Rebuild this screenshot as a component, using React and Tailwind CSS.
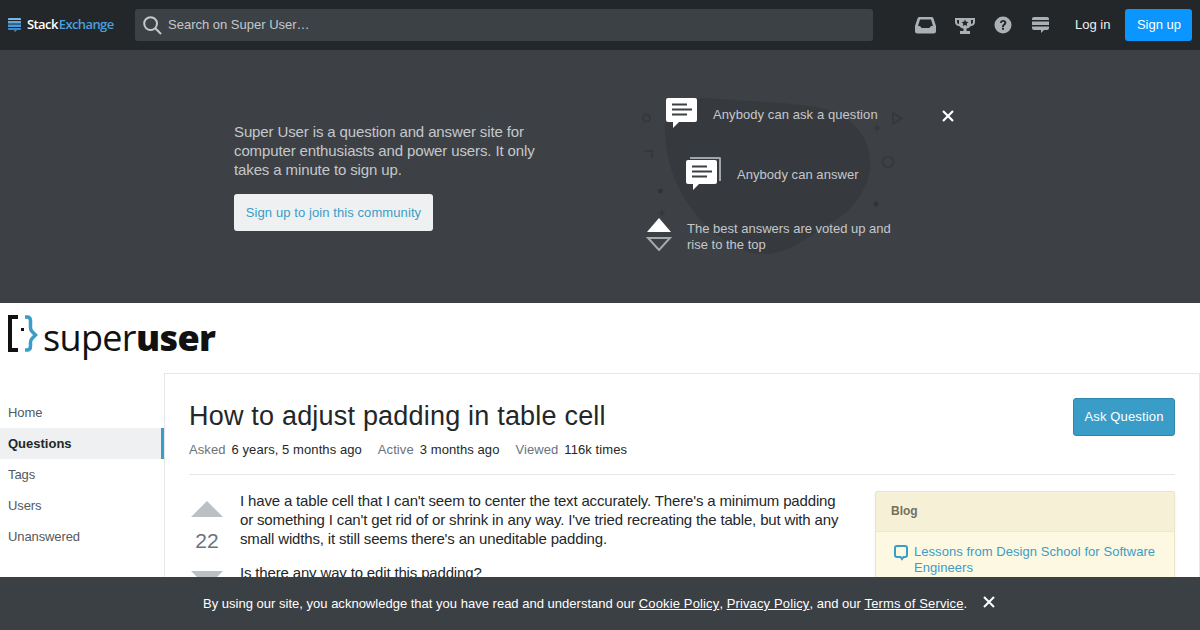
const sans = { fontFamily: '"Liberation Sans", Arial, sans-serif' };

function Bubble({ className }) {
  return (
    <svg className={className} viewBox="0 0 31 30" aria-hidden="true">
      <path d="M2 0h27a2 2 0 0 1 2 2v20a2 2 0 0 1-2 2H13l-6 6v-6H2a2 2 0 0 1-2-2V2a2 2 0 0 1 2-2z" fill="#fff" />
      <path d="M6 5.500h15v2H6zM6 10.500h20v2H6zM6 15.500h15v2H6z" fill="#3b4045" />
    </svg>
  );
}

function Nav({ children, active }) {
  return (
    <div className={active
      ? 'h-[31px] pl-2 flex items-center text-[13px] font-bold text-[#242729] bg-[#eff0f1] border-r-[3px] border-[#3a9dc8]'
      : 'h-[31px] pl-2 flex items-center text-[13px] tracking-[-0.1px] text-[#535a60]'}>
      {children}
    </div>
  );
}

export default function App() {
  return (
    <div className="relative w-[1200px] h-[630px] overflow-hidden bg-white" style={sans}>
      {/* top bar */}
      <header className="h-[50px] bg-[#242729] flex items-center pl-2 pr-2">
        <div className="w-[127px] flex items-center shrink-0">
          <svg className="w-[13px] h-[16px] mr-[6px]" viewBox="0 0 13 16">
            <path d="M1 1h11a1 1 0 0 1 1 1v1H0V2a1 1 0 0 1 1-1z" fill="#7ab7e6" />
            <rect y="4" width="13" height="2.500" fill="#5fa8e0" />
            <rect y="7.500" width="13" height="2.500" fill="#4b9ad8" />
            <path d="M0 11h13v1a1 1 0 0 1-1 1H9l-2.500 2.500V13H1a1 1 0 0 1-1-1z" fill="#3b8bcc" />
          </svg>
          <span className="text-[13px] font-semibold tracking-[-0.6px] text-white" style={{ fontFamily: '"Open Sans", sans-serif' }}>
            Stack<span className="text-[#4a9fdf] ml-[1px]">Exchange</span>
          </span>
        </div>
        <div className="w-[738px] h-[32px] rounded-[3px] bg-[#3c4146] flex items-center pl-2 shrink-0">
          <svg className="w-[19px] h-[19px] mr-[6px]" viewBox="0 0 19 19" fill="none" stroke="#c4c8cc" strokeWidth="2">
            <circle cx="7.600" cy="7.600" r="6.400" />
            <path d="M12.300 12.300l5.700 5.700" />
          </svg>
          <span className="text-[13px] text-[#c4c8cc]">Search on Super User…</span>
        </div>
        <div className="flex items-center ml-[42px] gap-[19px] shrink-0">
          <svg className="w-[21px] h-[18px]" viewBox="0 0 21 18">
            <path fillRule="evenodd" fill="#abb0b5" d="M4.500 1h12c1 0 1.600.5 2 1.500L21 10v5a2.500 2.500 0 0 1-2.500 2.500h-16A2.500 2.500 0 0 1 0 15v-5l2.500-7.500C2.900 1.500 3.500 1 4.500 1zM5 3.500 3 10c2 0 3 .5 3.500 2h8c.5-1.500 1.500-2 3.500-2l-2-6.500z" />
          </svg>
          <svg className="w-[20px] h-[17px]" viewBox="0 0 20 17">
            <path fillRule="evenodd" fill="#abb0b5" d="M0 1h20v4c0 2.500-2 4-4.500 4.300C14.700 10.500 13.500 11.300 11.500 11.500V14H15v3H5v-3h3.500v-2.500C6.500 11.300 5.300 10.500 4.500 9.300 2 9 0 7.500 0 5zM2 3v2c0 1 .7 1.800 2 2.200V3zm14 0v4.200c1.300-.4 2-1.200 2-2.200V3z" />
            <path fill="#242729" d="M10 2.500l1.100 2.300 2.400.3-1.800 1.600.5 2.400-2.200-1.200-2.200 1.200.5-2.400-1.800-1.600 2.400-.3z" />
          </svg>
          <svg className="w-[18px] h-[18px]" viewBox="0 0 18 18">
            <circle cx="9" cy="9" r="8.500" fill="#abb0b5" />
            <path d="M6 7c0-2 1.500-3 3.200-3S12.300 5 12.300 6.800c0 2.400-2.400 2.400-2.400 4.200H8c0-2.900 2.300-2.900 2.300-4.200 0-.7-.5-1.100-1.200-1.100-.8 0-1.200.5-1.300 1.300zM8 11.800h2v2H8z" fill="#242729" />
          </svg>
          <svg className="ml-px w-[17px] h-[18px]" viewBox="0 0 17 18">
            <path d="M2 1h13a2 2 0 0 1 2 2v1H0V3a2 2 0 0 1 2-2z" fill="#abb0b5" />
            <rect y="5.500" width="17" height="3.500" fill="#abb0b5" />
            <path d="M0 10.500h17V12a2 2 0 0 1-2 2h-3l-3 3v-3H2a2 2 0 0 1-2-2z" fill="#abb0b5" />
          </svg>
        </div>
        <span className="ml-[26px] text-[13px] text-[#eff0f1] shrink-0">Log in</span>
        <div className="ml-[15px] w-[67px] h-[32px] rounded-[3px] bg-[#0a95ff] flex items-center justify-center text-[13px] text-white shrink-0">Sign up</div>
      </header>

      {/* hero */}
      <section className="relative h-[253px] bg-[#3d4145]">
        <svg className="absolute left-[640px] top-[48px] w-[270px] h-[160px]" viewBox="0 0 270 160" fill="none" aria-hidden="true">
          <path d="M25 25C30 5 50-2 80 1c50 4 90 4 115 13 27 12 37 36 35 58-4 23-20 43-40 53-20 13-40 30-65 31-25 1-55-21-70-41C35 90 24 60 25 25z" fill="#36393d" />
          <g stroke="#33373b" strokeWidth="1.500">
            <circle cx="6.500" cy="20" r="3.500" />
            <circle cx="248" cy="64" r="5.500" />
            <path d="M253 15l9 5.500-9 5.500zM237 27v6M234 30h6M4 53h8v7M22 112v6M19 115h6" />
          </g>
          <circle cx="20.500" cy="93" r="2.500" fill="#303438" />
          <circle cx="236" cy="106" r="2.500" fill="#303438" />
        </svg>
        <div className="absolute left-[234px] top-[72px] w-[330px]">
          <p className="text-[15px] leading-[19px] tracking-[-0.12px] text-[#c4c8cc]">
            Super User is a question and answer site for computer enthusiasts and power users. It only takes a minute to sign up.
          </p>
          <div className="mt-[15px] w-[199px] h-[37px] rounded-[3px] bg-[#eff0f1] flex items-center justify-center text-[13px] tracking-[0.09px] text-[#3a9dc8]">
            Sign up to join this community
          </div>
        </div>
        <div className="absolute left-[646px] top-[48px] w-[260px] text-[13px] text-[#c4c8cc]">
          <div className="ml-[20px] flex items-start tracking-[0.08px]">
            <Bubble className="w-[31px] h-[30px] shrink-0" />
            <span className="ml-[16px] mt-[9px] leading-[16px] whitespace-nowrap">Anybody can ask a question</span>
          </div>
          <div className="ml-[40px] mt-[29px] flex items-start tracking-[0.05px]">
            <div className="relative w-[35px] h-[33px] shrink-0">
              <div className="absolute right-0 top-0 w-[31px] h-[24px] border-t-2 border-r-2 border-[#9fa6ad] rounded-tr-[2px]" />
              <Bubble className="absolute left-0 top-[3px] w-[31px] h-[30px]" />
            </div>
            <span className="ml-[16px] mt-[10px] leading-[16px] whitespace-nowrap">Anybody can answer</span>
          </div>
          <div className="mt-[28px] flex items-start">
            <svg className="w-[26px] h-[33px] shrink-0" viewBox="0 0 26 33">
              <path d="M13 0l12 14H1z" fill="#fff" />
              <path d="M2 20h22L13 32z" fill="none" stroke="#a5aaae" strokeWidth="2" />
            </svg>
            <span className="ml-[15px] mt-[3px] w-[215px] leading-[16px]">The best answers are voted up and rise to the top</span>
          </div>
        </div>
        <svg className="absolute left-[942px] top-[60px] w-[12px] h-[12px]" viewBox="0 0 12 12" stroke="#fff" strokeWidth="2.200">
          <path d="M1 1l10 10M11 1 1 11" />
        </svg>
      </section>

      {/* site logo */}
      <div className="h-[70px] pl-2 flex items-start">
        <svg className="mt-[12px] w-[30px] h-[39px] shrink-0" viewBox="0 0 30 39" fill="none">
          <path d="M10 2H2v33h8" stroke="#111" strokeWidth="4" />
          <rect x="13" y="13" width="3" height="3" fill="#111" />
          <path d="M17 2h2c2 0 3.500 1.500 3.500 4v7c0 2 1 3 2 4l3 3-3 3c-1 1-2 2-2 4v4c0 2.500-1.500 4-3.500 4h-2" stroke="#3a9dc8" strokeWidth="3.500" />
        </svg>
        <span className="ml-[5px] mt-[11px] text-[36px] leading-[48px] tracking-[-0.65px] font-normal text-[#111]" style={{ fontFamily: '"Open Sans", sans-serif' }}>
          super<span className="font-extrabold">user</span>
        </span>
      </div>

      {/* body */}
      <div className="flex">
        <nav className="w-[164px] shrink-0 pt-[24px]">
          <Nav>Home</Nav>
          <Nav active>Questions</Nav>
          <Nav>Tags</Nav>
          <Nav>Users</Nav>
          <Nav>Unanswered</Nav>
        </nav>
        <main className="w-[1036px] h-[400px] border-l border-t border-r border-[#e4e6e8] pl-[24px] pr-[24px] pt-[24px]">
          <div className="flex justify-between items-start">
            <h1 className="text-[27px] leading-[35px] tracking-[0.2px] text-[#242729] mt-[1px]">How to adjust padding in table cell</h1>
            <div className="w-[102px] h-[38px] rounded-[3px] bg-[#3a9dc8] border border-[#2f86ab] flex items-center justify-center text-[13px] tracking-[0.15px] text-white">Ask Question</div>
          </div>
          <div className="mt-[5px] flex text-[13px] tracking-[0.08px] leading-[17px] pb-[16px] border-b border-[#e4e6e8]">
            <span className="text-[#6a737c]">Asked</span><span className="ml-[6px] text-[#242729]">6 years, 5 months ago</span>
            <span className="ml-[16px] text-[#6a737c]">Active</span><span className="ml-[6px] text-[#242729]">3 months ago</span>
            <span className="ml-[16px] text-[#6a737c]">Viewed</span><span className="ml-[6px] text-[#242729]">116k times</span>
          </div>
          <div className="flex mt-[16px]">
            <div className="w-[36px] shrink-0 flex flex-col items-center">
              <div className="mt-[10px] w-0 h-0 border-l-[16px] border-r-[16px] border-b-[16px] border-l-transparent border-r-transparent border-b-[#bbc0c4]" />
              <div className="mt-[10px] text-[21px] leading-[27px] text-[#6a737c]">22</div>
              <div className="mt-[17px] w-0 h-0 border-l-[16px] border-r-[16px] border-t-[16px] border-l-transparent border-r-transparent border-t-[#bbc0c4]" />
            </div>
            <div className="ml-[15px] w-[610px] shrink-0 text-[15px] leading-[19px] tracking-[-0.16px] text-[#242729]">
              <p>I have a table cell that I can't seem to center the text accurately. There's a minimum padding or something I can't get rid of or shrink in any way. I've tried recreating the table, but with any small widths, it still seems there's an uneditable padding.</p>
              <p className="mt-[15px]">Is there any way to edit this padding?</p>
            </div>
            <aside className="ml-[25px] w-[300px] h-[120px] shrink-0 border border-[#ece4c8] bg-[#fdf8e2] rounded-[2px] shadow-[0_1px_3px_rgba(0,0,0,0.06)]">
              <div className="h-[40px] px-[15px] pb-[2px] flex items-center bg-[#f6f1d6] border-b border-[#efe8cb] text-[12px] font-bold text-[#746f5f]">Blog</div>
              <div className="mt-[12px] flex pl-[18px] pr-[10px]">
                <svg className="w-[14px] h-[16px] mt-[1px] shrink-0" viewBox="0 0 14 16" fill="none">
                  <path d="M3 1h8a2 2 0 0 1 2 2v7a2 2 0 0 1-2 2H9.500L8 14l-1.500-2H3a2 2 0 0 1-2-2V3a2 2 0 0 1 2-2z" stroke="#3a9dc8" strokeWidth="2" />
                </svg>
                <span className="ml-[6px] text-[13px] tracking-[0.05px] leading-[16px] text-[#3a9dc8]">Lessons from Design School for Software Engineers</span>
              </div>
            </aside>
          </div>
        </main>
      </div>

      {/* cookie bar */}
      <div className="absolute left-0 right-0 bottom-0 h-[53px] bg-[#3b4045] flex text-[13px] tracking-[0.01px] text-white">
        <span className="ml-[203px] mt-[18px] leading-[17px] whitespace-nowrap">
          By using our site, you acknowledge that you have read and understand our <u className="tracking-[0.14px]">Cookie Policy</u>, <u className="tracking-[0.14px]">Privacy Policy</u>, and our <u className="tracking-[0.14px]">Terms of Service</u>.
        </span>
        <svg className="ml-[16px] mt-[19px] w-[12px] h-[12px]" viewBox="0 0 12 12" stroke="#fff" strokeWidth="2">
          <path d="M1 1l10 10M11 1 1 11" />
        </svg>
      </div>
    </div>
  );
}
